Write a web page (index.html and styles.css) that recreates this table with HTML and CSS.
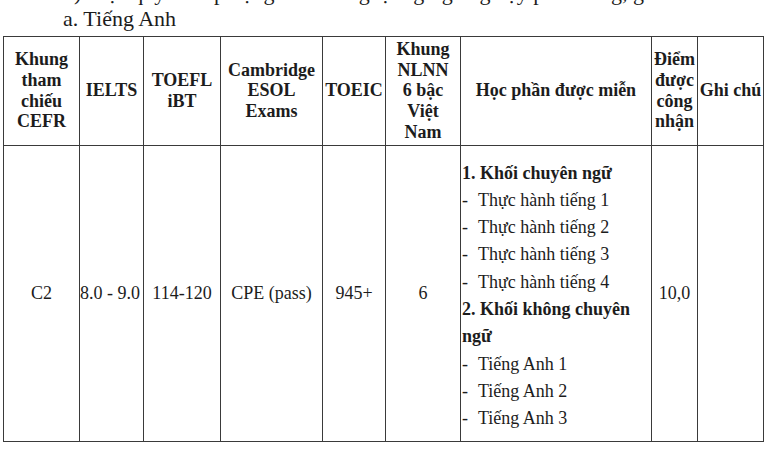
FILE: index.html
```html
<!DOCTYPE html>
<html lang="vi">
<head>
<meta charset="utf-8">
<link rel="stylesheet" href="styles.css">
</head>
<body>
<div class="page">
  <p class="cut">b) Việc quy đổi áp dụng đối với ngoại ngữ giảng dạy phổ thông, gồm:</p>
  <p class="sub">a. Tiếng Anh</p>
  <table class="grid">
    <colgroup>
      <col class="c1"><col class="c2"><col class="c3"><col class="c4"><col class="c5">
      <col class="c6"><col class="c7"><col class="c8"><col class="c9">
    </colgroup>
    <thead>
      <tr>
        <th>Khung tham chiếu CEFR</th>
        <th>IELTS</th>
        <th>TOEFL iBT</th>
        <th>Cambridge ESOL Exams</th>
        <th>TOEIC</th>
        <th>Khung<br>NLNN<br>6 bậc<br>Việt<br>Nam</th>
        <th>Học phần được miễn</th>
        <th>Điểm được công nhận</th>
        <th>Ghi chú</th>
      </tr>
    </thead>
    <tbody>
      <tr>
        <td>C2</td>
        <td class="tight">8.0 - 9.0</td>
        <td>114-120</td>
        <td>CPE (pass)</td>
        <td>945+</td>
        <td>6</td>
        <td class="courses">
          <div class="group">1. Khối chuyên ngữ</div>
          <div class="item"><span class="dash">-</span>Thực hành tiếng 1</div>
          <div class="item"><span class="dash">-</span>Thực hành tiếng 2</div>
          <div class="item"><span class="dash">-</span>Thực hành tiếng 3</div>
          <div class="item"><span class="dash">-</span>Thực hành tiếng 4</div>
          <div class="group">2. Khối không chuyên ngữ</div>
          <div class="item"><span class="dash">-</span>Tiếng Anh 1</div>
          <div class="item"><span class="dash">-</span>Tiếng Anh 2</div>
          <div class="item"><span class="dash">-</span>Tiếng Anh 3</div>
        </td>
        <td>10,0</td>
        <td></td>
      </tr>
    </tbody>
  </table>
</div>
</body>
</html>
```

FILE: styles.css
```css
html, body {
  margin: 0;
  padding: 0;
  background: #ffffff;
}

body {
  font-family: "Liberation Serif", "Times New Roman", serif;
  color: #1c1c1c;
  width: 773px;
  height: 449px;
  overflow: hidden;
}

.page {
  padding-left: 3px;
}

.cut {
  margin: -20px 0 0 60px;
  font-size: 22px;
  line-height: 26px;
  white-space: nowrap;
}

.sub {
  margin: 0 0 0 60px;
  font-size: 22px;
  line-height: 26px;
  height: 30px;
}

.grid {
  border-collapse: collapse;
  table-layout: fixed;
  width: 761px;
  font-size: 18px;
}

.c1 { width: 76px; }
.c2 { width: 64px; }
.c3 { width: 77px; }
.c4 { width: 102px; }
.c5 { width: 63px; }
.c6 { width: 75px; }
.c7 { width: 191px; }
.c8 { width: 46px; }
.c9 { width: 66px; }

.grid th,
.grid td {
  border: 1.5px solid #3a3a3a;
  text-align: center;
  vertical-align: middle;
}

.grid th {
  font-weight: bold;
  line-height: 20.7px;
  padding: 2px 1px;
}

.grid td {
  font-weight: normal;
  line-height: 27.3px;
  padding: 0 1px;
}

.grid td.tight {
  padding: 0;
  text-align: left;
}

.grid td.courses {
  text-align: left;
  padding: 14px 1px 9px 1px;
}

.group {
  font-weight: bold;
}

.dash {
  display: inline-block;
  width: 16px;
}
```
